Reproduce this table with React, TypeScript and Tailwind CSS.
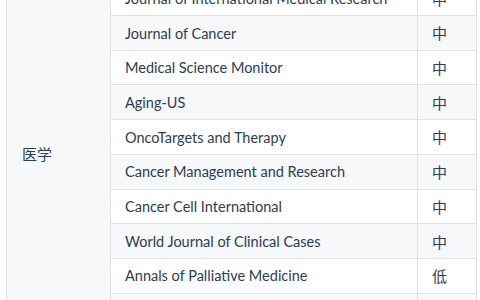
const rows: { name: string; level: string }[] = [
  { name: 'Oncology Letters', level: '中' },
  { name: 'Journal of International Medical Research', level: '中' },
  { name: 'Journal of Cancer', level: '中' },
  { name: 'Medical Science Monitor', level: '中' },
  { name: 'Aging-US', level: '中' },
  { name: 'OncoTargets and Therapy', level: '中' },
  { name: 'Cancer Management and Research', level: '中' },
  { name: 'Cancer Cell International', level: '中' },
  { name: 'World Journal of Clinical Cases', level: '中' },
  { name: 'Annals of Palliative Medicine', level: '低' },
  { name: 'Translational Cancer Research', level: '低' },
  { name: 'Medicine', level: '低' },
];

export default function App() {
  return (
    <div className="h-[300px] w-[480px] overflow-hidden bg-white font-['Lato','Noto_Sans_CJK_SC',sans-serif] text-[14.5px] text-[#2c3e50]">
      <div className="-mt-[54.3px] pl-[6px]">
        <table className="w-[470px] table-fixed border-collapse">
          <colgroup>
            <col className="w-[104px]" />
            <col className="w-[307px]" />
            <col className="w-[59px]" />
          </colgroup>
          <tbody>
            {rows.map((row, i) => (
              <tr key={row.name} className={i % 2 === 0 ? 'bg-[#f6f8fa]' : 'bg-white'}>
                {i === 0 && (
                  <td rowSpan={rows.length} className="border border-[#dfe2e5] bg-[#f6f8fa] px-[15px] align-middle text-[15px]">
                    医学
                  </td>
                )}
                <td className="h-[34.7px] border border-[#dfe2e5] px-[14px] pt-[2px] pb-0 leading-none whitespace-nowrap">
                  {row.name}
                </td>
                <td className="h-[34.7px] border border-[#dfe2e5] px-[14px] pt-[2px] pb-0 leading-none text-[15px]">
                  {row.level}
                </td>
              </tr>
            ))}
          </tbody>
        </table>
      </div>
    </div>
  );
}
